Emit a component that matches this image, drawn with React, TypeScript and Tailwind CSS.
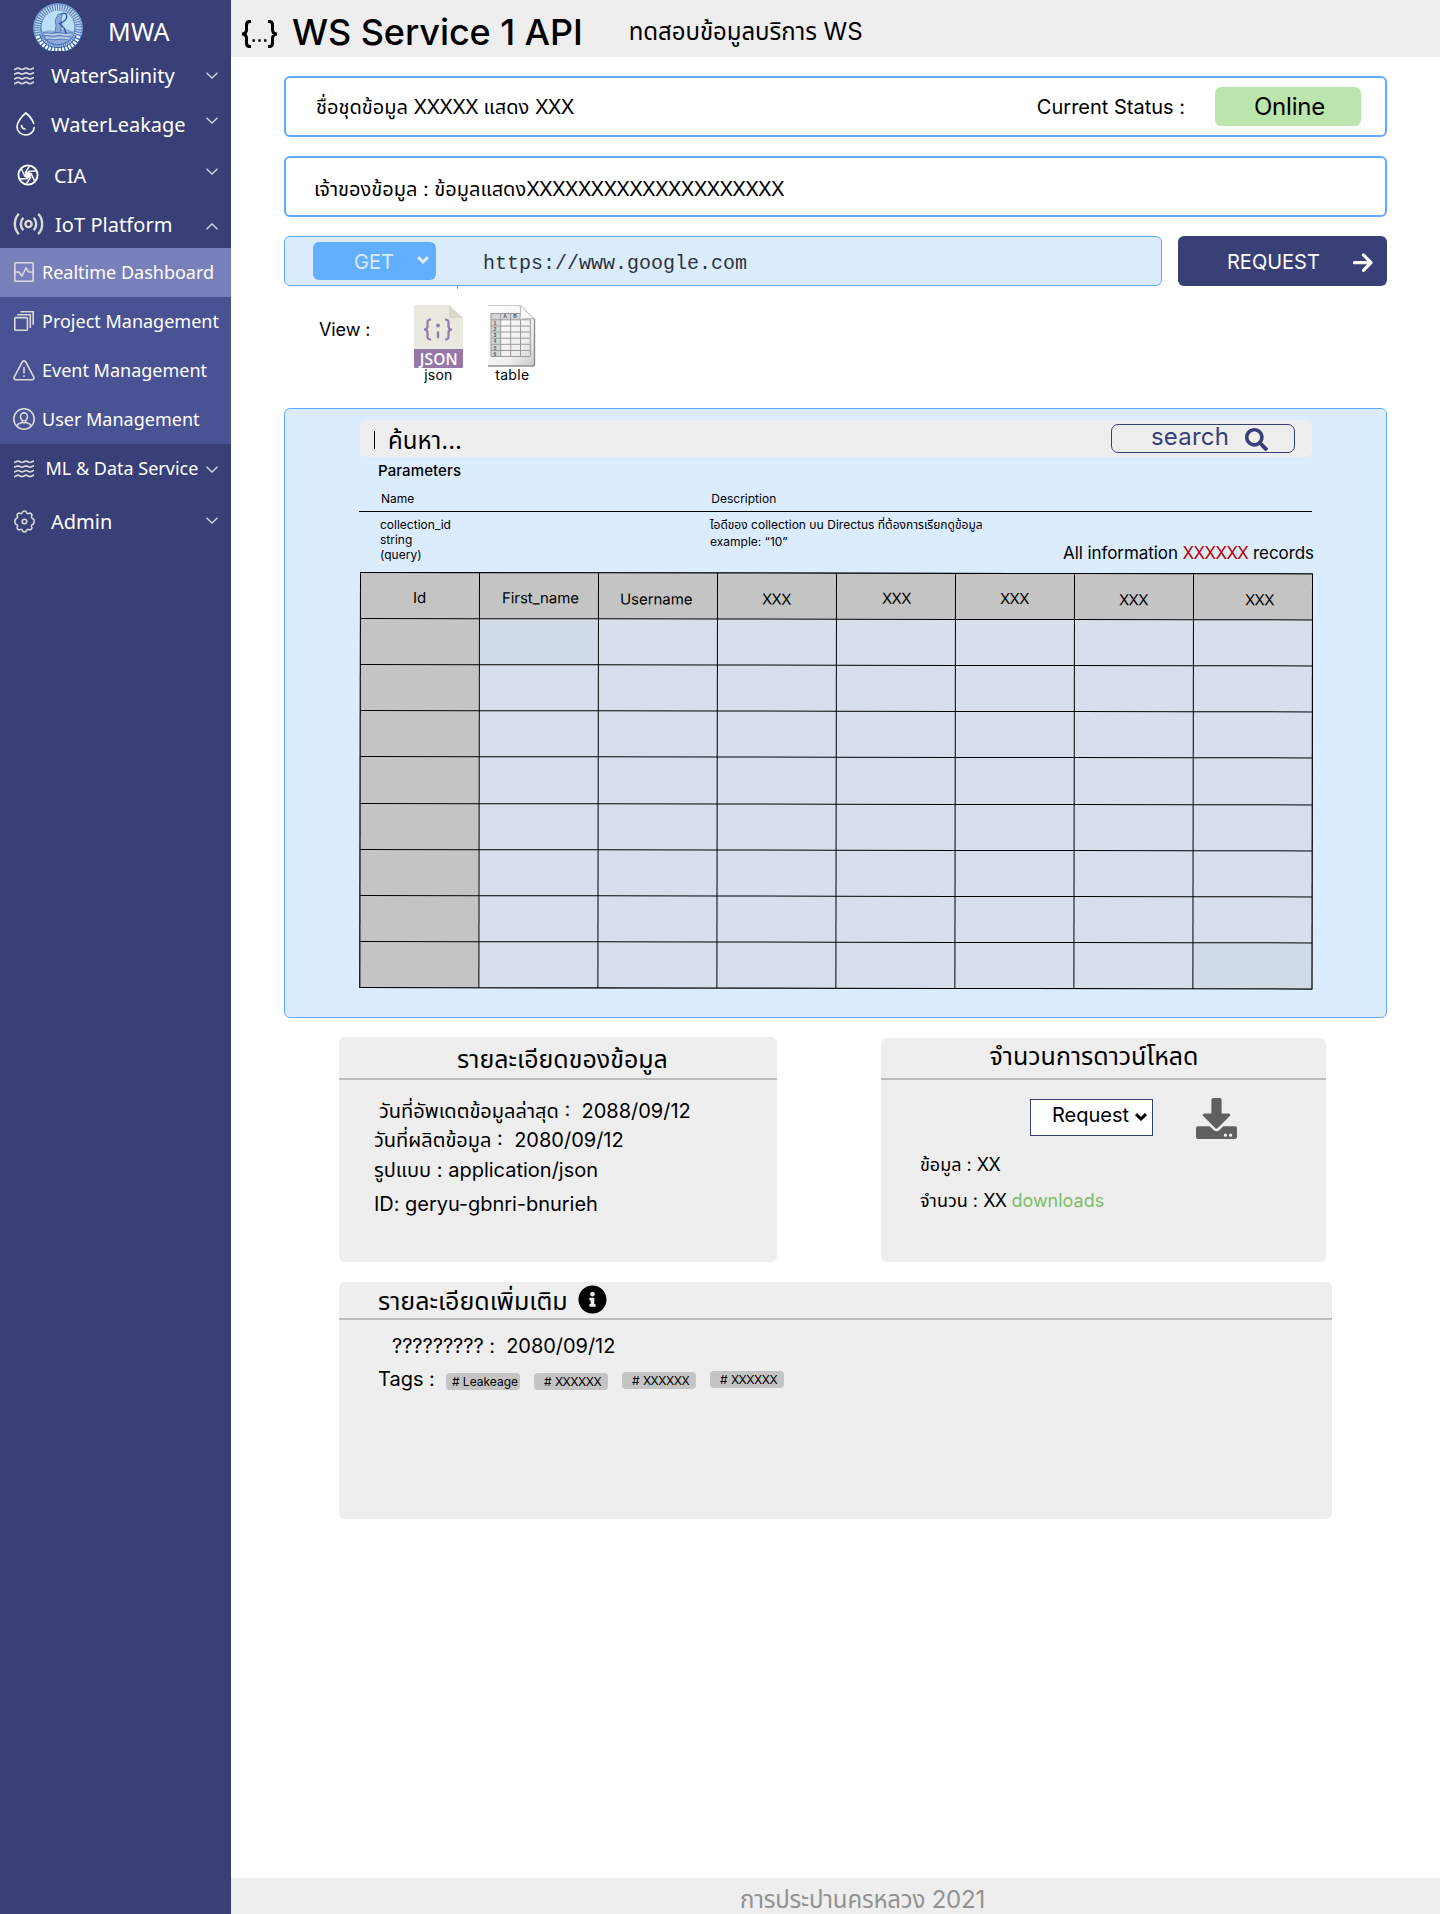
import type { ReactNode } from "react";
import { FaDownload, FaInfoCircle, FaSearch } from "react-icons/fa";

function T({ className = "", children }: { className?: string; children: ReactNode }) {
  return <span className={"inline-block shrink-0 whitespace-pre " + className}>{children}</span>;
}

function X({ n, className = "" }: { n: number; className?: string }) {
  return <span className={"tracking-[-0.038em] " + className}>{"X".repeat(n)}</span>;
}

const grey = "#d9d9d9";

function Logo() {
  return (
    <svg width="50" height="48" viewBox="0 0 50 48" className="ml-[33px] mt-[3px]">
      <circle cx="25" cy="25" r="24.6" fill="#4f7dc0" />
      <circle cx="25" cy="25" r="20.500" fill="none" stroke="#c9daf0" strokeWidth="6" strokeDasharray="1.300 1.100" />
      <circle cx="25" cy="25" r="24.300" fill="none" stroke="#8fb2e2" strokeWidth="0.800" />
      <circle cx="25" cy="24" r="16.500" fill="#b8e0f8" />
      <path d="M9.500 29c4-2 7-2 11-1l9-2c4 0 9 1 12 3-2 7-9 12-16.500 12S11.500 36 9.500 29z" fill="#8eacd9" />
      <path d="M10 30c4-1.500 6 1.500 10 0s8 1.500 20-.5M11 33c4-1.500 8 1.500 12 0s8 1.500 15 0M14 36.500c4-1.500 6 1.500 11 0s7 1 10 0" fill="none" stroke="#4c75b8" strokeWidth="0.800" />
      <path d="M12 31.500c4-1.500 7 1.500 11 0s8 1.500 15 0M13 35c4-1.500 6 1.500 11 0s7 1 12 0" fill="none" stroke="#e4eef9" strokeWidth="0.800" />
      <path d="M25 11.500c2-1.500 4-1 4 1l-1 4 1 5-2 8h-5l1-7-1-5z" fill="#8ba9d8" stroke="#4267ac" strokeWidth="0.700" />
      <path d="M28 11.500c2-1.500 5-1.500 5.500.5s-.5 5-3 6.500l-4 2 5 5 1.500 5" fill="none" stroke="#2d4f9e" strokeWidth="1.300" />
      <path d="M4.500 33c3 9 11 14 20.500 14s17.500-5 20.500-14" fill="none" stroke="#2f5fae" strokeWidth="6" />
      <path d="M4.500 33c3 9 11 14 20.500 14s17.500-5 20.500-14" fill="none" stroke="#fff" strokeWidth="4" strokeDasharray="2.200 1.200" />
    </svg>
  );
}

function Waves() {
  const d = "c1.700 0 2.300-1.400 4-1.400s2.300 1.400 4 1.400 2.300-1.400 4-1.400 2.300 1.400 4 1.400 2.300-1.400 4-1.400";
  return (
    <svg width="20" height="18" viewBox="0 0 20 18" fill="none" stroke={grey} strokeWidth="1.700">
      <path d={"M0 2.500" + d} />
      <path d={"M0 7.200" + d} />
      <path d={"M0 11.900" + d} />
      <path d={"M0 16.600" + d} />
    </svg>
  );
}
function Drop() {
  return (
    <svg width="20" height="24" viewBox="0 0 20 24" fill="none" stroke="#fff" strokeWidth="1.600" strokeLinecap="round">
      <path d="M18.200 15.500c-.4 4.500-4 7.500-8.400 7.500C5 23 1 19.800 1 14.800 1 10 6 4 9.800 1c3 2.300 6.600 6.600 7.900 10.500" />
      <path d="M5.500 13.500c.2 2 1.600 3.300 3.600 3.500" />
    </svg>
  );
}
function Aperture() {
  return (
    <svg width="22" height="22" viewBox="0 0 22 22" fill="none" stroke="#fff">
      <circle cx="11" cy="11" r="9.600" strokeWidth="1.900" />
      <circle cx="11" cy="11" r="3" fill="#fff" strokeWidth="0.500" />
      <path d="M11 7.500l8-.5M14 9.200l3.500 7.500M14 12.800L9.500 19.500M11 14.500L3 15M8 12.800L4.500 5.300M8 9.200l4.500-7" strokeWidth="1.500" />
    </svg>
  );
}
function Signal() {
  return (
    <svg width="31" height="22" viewBox="0 0 31 22" fill="none" stroke={grey} strokeWidth="2.400">
      <circle cx="15.500" cy="11" r="3.100" />
      <path d="M10.300 4.800c-3.300 3.500-3.300 8.900 0 12.400M20.700 4.800c3.300 3.500 3.300 8.900 0 12.400M5.800.8c-5.300 6-5.300 14.400 0 20.400M25.200.8c5.300 6 5.300 14.400 0 20.400" />
    </svg>
  );
}
function Pulse() {
  return (
    <svg width="20" height="20" viewBox="0 0 20 20" fill="none" stroke={grey} strokeWidth="1.600">
      <rect x="0.800" y="0.800" width="18.400" height="18.400" rx="0.800" />
      <path d="M1 10h4l2.800 4 4.200-8 2.500 4H19" />
    </svg>
  );
}
function Stack() {
  return (
    <svg width="20" height="20" viewBox="0 0 20 20" fill="none" stroke={grey} strokeWidth="1.600">
      <rect x="0.800" y="6.600" width="12.600" height="12.600" rx="0.800" />
      <path d="M3.200 3.700h13.100v13.200M6.300.8h12.900v13" />
    </svg>
  );
}
function Warning() {
  return (
    <svg width="22" height="21" viewBox="0 0 22 21" fill="none" stroke={grey} strokeWidth="1.600">
      <path d="M9.200 2c.8-1.500 2.800-1.500 3.600 0l8 15c.7 1.400-.2 2.700-1.700 2.700H2.900c-1.500 0-2.400-1.300-1.700-2.700z" />
      <path d="M11 7v6.500M11 15.300v1.700" />
    </svg>
  );
}
function UserRing() {
  return (
    <svg width="22" height="22" viewBox="0 0 22 22" fill="none" stroke={grey} strokeWidth="1.600">
      <circle cx="11" cy="11" r="10.200" />
      <ellipse cx="11" cy="8.800" rx="3.500" ry="3.900" />
      <path d="M4 18.300c.5-2.300 2.600-3.300 5.200-3.800v-2.200M18 18.300c-.5-2.300-2.600-3.300-5.200-3.800v-2.200M9.200 14.700h3.600" />
    </svg>
  );
}
function Gear() {
  return (
    <svg width="23" height="23" viewBox="0 0 24 24" fill="none" stroke={grey} strokeWidth="1.600" strokeLinejoin="round">
      <path d="M9.800 2.600c.4-2 4-2 4.400 0 .2 1.200 1.300 1.700 2.300 1 1.800-1.100 4.200 1.300 3 3-.6 1-.1 2.100 1 2.400 2 .4 2 5.600 0 6-1.100.3-1.600 1.400-1 2.400 1.200 1.700-1.200 4.100-3 3-1-.7-2.100-.2-2.300 1-.4 2-4 2-4.400 0-.2-1.200-1.300-1.700-2.300-1-1.800 1.100-4.200-1.300-3-3 .6-1 .1-2.100-1-2.400-2-.4-2-5.600 0-6 1.100-.3 1.600-1.400 1-2.400-1.200-1.700 1.200-4.100 3-3 1 .7 2.100.2 2.300-1z" />
      <circle cx="12" cy="12" r="2.400" />
    </svg>
  );
}
function Chevron({ up = false, className = "" }: { up?: boolean; className?: string }) {
  return (
    <svg width="12" height="7" viewBox="0 0 12 7" fill="none" stroke={grey} strokeWidth="1.300" className={"ml-auto mr-[13px] shrink-0 " + className}>
      <path d={up ? "M.5 6.200L6 1l5.500 5.200" : "M.5.800L6 6l5.500-5.200"} />
    </svg>
  );
}
function BoldChevron({ className = "" }: { className?: string }) {
  return (
    <svg width="12" height="8" viewBox="0 0 12 8" fill="none" stroke="currentColor" strokeWidth="3" className={"shrink-0 " + className}>
      <path d="M1 1.200l5 4.800 5-4.800" />
    </svg>
  );
}

function JsonFile() {
  return (
    <svg width="49" height="63" viewBox="0 0 49 63">
      <path d="M1.500 0H35l14 13v31H0V1.500z" fill="#e9e9e0" />
      <path d="M35 0v13h14z" fill="#d9d7ca" />
      <path d="M0 44h49v17.500q0 1.500-1.500 1.500h-46Q0 63 0 61.500z" fill="#9777a8" />
      <g fill="none" stroke="#9777a8" strokeWidth="2.200">
        <path d="M17 14.500c-3 0-3.500 1-3.500 3v4c0 2-1 3-3.500 3 2.500 0 3.500 1 3.500 3v4c0 2 .5 3 3.500 3" />
        <path d="M31 14.500c3 0 3.500 1 3.500 3v4c0 2 1 3 3.500 3-2.500 0-3.500 1-3.500 3v4c0 2-.5 3-3.500 3" />
      </g>
      <circle cx="24" cy="20.500" r="1.900" fill="#9777a8" />
      <path d="M24 27.500v4.500" stroke="#9777a8" strokeWidth="2.400" strokeLinecap="round" />
      <text x="24.700" y="59.500" textAnchor="middle" textLength="38" fontSize="15.500" fontWeight="600" fill="#fff" fontFamily="'Open Sans'">
        JSON
      </text>
    </svg>
  );
}
function TableFile() {
  const rows = [0, 1, 2, 3, 4, 5];
  return (
    <svg width="48" height="62" viewBox="0 0 48 62">
      <defs>
        <linearGradient id="sheet" x1="0" y1="0" x2="1" y2="1">
          <stop offset="0" stopColor="#ffffff" />
          <stop offset="0.700" stopColor="#eeeeee" />
          <stop offset="1" stopColor="#c8c8c8" />
        </linearGradient>
      </defs>
      <path d="M0 .5h32L46.500 14v46q0 1-1 1H0z" fill="url(#sheet)" />
      <path d="M0 .5h32" stroke="#ccc" />
      <path d="M46.500 14v46q0 1-1 1H0" fill="none" stroke="#8e8e8e" strokeWidth="1.400" />
      <rect x="3" y="8" width="29" height="6.500" fill="#d5d5d5" />
      <rect x="3" y="8" width="9.500" height="43.500" fill="#d5d5d5" />
      <path
        d="M3 8.500h29M3 14.800h39M3 21h39M3 27h39M3 33.200h39M3 39.300h39M3 45.500h39M3 51.500h39M3 8v43.500M12.700 8v43.500M22.700 8v43.500M32.500 14v37.500M42.300 14.500v37"
        stroke="#9a9a9a"
        strokeWidth="1"
      />
      <path d="M32 .5c1 4 1 9-.5 14 5-1 10-1 15-.5z" fill="#fafafa" stroke="#a8a8a8" strokeWidth="0.900" />
      <g fontSize="5" fontWeight="700" fill="#555" fontFamily="'Liberation Sans'" textAnchor="middle">
        <text x="17" y="13.300">A</text>
        <text x="27" y="13.300">B</text>
        {rows.map((r) => (
          <text key={r} x="7" y={19.700 + r * 6.200}>{r + 1}</text>
        ))}
      </g>
    </svg>
  );
}

const headers = [
  { t: "Id", c: "pl-[52px]" },
  { t: "First_name", c: "pl-[22px]" },
  { t: "Username", c: "pl-[21px] pt-px" },
  { t: <X n={3} />, c: "pl-[44px] pt-px" },
  { t: <X n={3} />, c: "pl-[45px]" },
  { t: <X n={3} />, c: "pl-[44px]" },
  { t: <X n={3} />, c: "pl-[44px] pt-px" },
  { t: <X n={3} />, c: "pl-[51px] pt-px" },
];

export default function App() {
  return (
    <div className="flex h-[1914px] w-[1440px] bg-white text-black [font-family:Inter,'Noto_Sans_Thai',sans-serif]">
      <aside className="h-full w-[231px] shrink-0 bg-[#384077] text-[20px] text-white [font-family:'Noto_Sans',sans-serif]">
        <div className="flex h-[51px] items-start">
          <Logo />
          <T className="ml-[25px] mt-[15px] text-[25px] leading-[32px] tracking-[0.3px]">MWA</T>
        </div>
        <div className="flex h-[48.400px] items-center pl-[14px] pt-[2px]">
          <Waves />
          <T className="ml-[17px]">WaterSalinity</T>
          <Chevron className="mb-px" />
        </div>
        <div className="flex h-[49.600px] items-center pl-[16px]">
          <Drop />
          <T className="ml-[15px] mt-[2px]">WaterLeakage</T>
          <Chevron className="mb-[7px]" />
        </div>
        <div className="flex h-[52px] items-center pl-[17px]">
          <Aperture />
          <T className="ml-[15px] mt-[2px]">CIA</T>
          <Chevron className="mb-[6px]" />
        </div>
        <div className="flex h-[47px] items-center pl-[13px]">
          <Signal />
          <T className="ml-[11px] mt-[2px] tracking-[0.05px]">IoT Platform</T>
          <Chevron up className="mt-[4px]" />
        </div>
        <div className="bg-[#495394] text-[18px]">
          <div className="flex h-[49px] items-center bg-[#7780bb] pl-[14px]">
            <Pulse />
            <T className="ml-[8px]">Realtime Dashboard</T>
          </div>
          <div className="flex h-[49px] items-center pl-[14px]">
            <Stack />
            <T className="ml-[8px]">Project Management</T>
          </div>
          <div className="flex h-[49px] items-center pl-[13px]">
            <Warning />
            <T className="ml-[7px]">Event Management</T>
          </div>
          <div className="flex h-[49px] items-center pl-[13px]">
            <UserRing />
            <T className="ml-[7px]">User Management</T>
          </div>
        </div>
        <div className="flex h-[48px] items-center pl-[14px] pt-[2px]">
          <Waves />
          <T className="ml-[11.500px] text-[18px]">ML &amp; Data Service</T>
          <Chevron className="mt-px" />
        </div>
        <div className="flex h-[58px] items-center pl-[13px] pt-[2px]">
          <Gear />
          <T className="ml-[15px]">Admin</T>
          <Chevron className="mb-[2px]" />
        </div>
      </aside>

      <div className="flex h-full flex-1 flex-col">
        <header className="flex h-[57px] items-start bg-[#eeeeee]">
          <svg width="37" height="28" viewBox="0 0 37 28" fill="none" stroke="#000" strokeWidth="3" className="ml-[10px] mt-[20px] shrink-0">
            <path d="M10 1.400H9C6.500 1.400 5.500 2.500 5.500 5v4.500C5.500 12 4 14 1 14c3 0 4.500 2 4.500 4.500V23c0 2.500 1 3.600 3.500 3.600h1M27 1.400h1c2.500 0 3.500 1.100 3.500 3.600v4.500C31.500 12 33 14 36 14c-3 0-4.500 2-4.500 4.500V23c0 2.500-1 3.600-3.500 3.600h-1" />
            <path d="M11.500 20.500h2.400M17.300 20.500h2.400M23.100 20.500h2.400" strokeWidth="2.400" />
          </svg>
          <T className="ml-[14px] mt-[8px] text-[36px] leading-[48px] font-medium tracking-[-0.08px]">WS Service 1 API</T>
          <T className="ml-[46px] mt-[20px] text-[24px] leading-[24px] tracking-[-0.05px]">ทดสอบข้อมูลบริการ WS</T>
        </header>

        <main className="flex flex-1 flex-col pl-[53px]">
          <section className="mt-[19px] flex h-[61px] w-[1103px] items-start rounded-[6px] border-2 border-[#60abff]">
            <T className="ml-[30px] mt-[17px] text-[20px] leading-[24px]">
              ชื่อชุดข้อมูล <X n={5} /> แสดง <X n={3} />
            </T>
            <div className="ml-auto flex items-start">
              <T className="mt-[17px] text-[20px] leading-[24px]">Current Status :</T>
              <div className="ml-[30px] mr-[24px] mt-[9px] flex h-[39px] w-[146px] justify-center rounded-[6px] bg-[#bbe5ac]">
                <T className="ml-[3px] mt-[8px] text-[24px] leading-[24px] tracking-[-0.2px]">Online</T>
              </div>
            </div>
          </section>

          <section className="mt-[19px] flex h-[61px] w-[1103px] items-start rounded-[6px] border-2 border-[#60abff]">
            <T className="ml-[28px] mt-[19px] text-[20px] leading-[24px]">
              เจ้าของข้อมูล : ข้อมูลแสดง<X n={20} />
            </T>
          </section>

          <section className="mt-[19px] flex h-[50px] w-[1103px] justify-between">
            <div className="flex w-[878px] items-start rounded-[6px] border border-[#60abff] bg-[#dbecff]">
              <div className="ml-[28px] mt-[5px] flex h-[38px] w-[123px] items-start rounded-[6px] bg-[#62aeff] text-[#dbecff]">
                <T className="ml-[41px] mt-[8px] text-[20px] leading-[24px]">GET</T>
                <BoldChevron className="ml-auto mr-[7px] mt-[14px]" />
              </div>
              <T className="ml-[47px] mt-[15px] text-[20px] leading-[24px] text-[#2f353c] [font-family:'Liberation_Mono',monospace]">https://www.google.com</T>
            </div>
            <div className="flex w-[209px] items-start rounded-[6px] bg-[#384077] text-white">
              <T className="ml-[49px] mt-[14px] text-[20px] leading-[24px]">REQUEST</T>
              <svg width="20" height="20" viewBox="0 0 20 20" fill="none" stroke="#fff" strokeWidth="3.200" className="ml-auto mr-[14px] mt-[17px]" strokeLinecap="round">
                <path d="M1.500 9.700H17" />
                <path d="M10.500 2l7.500 7.700-7.500 7.700" strokeLinejoin="round" />
              </svg>
            </div>
          </section>
          <div className="ml-[173px] h-[3px] w-px bg-[#60abff]" />

          <section className="mt-[16px] flex h-[103px] items-start">
            <T className="ml-[35px] mt-[13px] text-[18px] leading-[24px] tracking-[-0.1px]">View :</T>
            <div className="ml-[43px] flex w-[50px] flex-col items-center">
              <JsonFile />
              <T className="-mt-px text-[14px] leading-[16px] tracking-[0.2px]">json</T>
            </div>
            <div className="ml-[25px] flex w-[48px] flex-col items-center">
              <TableFile />
              <T className="text-[14px] leading-[16px] tracking-[0.3px]">table</T>
            </div>
          </section>

          <section className="h-[610px] w-[1103px] rounded-[6px] border border-[#60abff] bg-[#dbecff] pl-[75px] pt-[11px]">
            <div className="flex h-[37px] w-[952px] items-start rounded-[6px] bg-[#eeeeee]">
              <div className="ml-[14px] mt-[11px] h-[18px] w-px bg-black" />
              <T className="ml-[13px] mt-[9px] text-[24px] leading-[24px]">ค้นหา...</T>
              <div className="ml-auto mr-[17px] mt-[4px] flex h-[29px] w-[184px] items-start rounded-[7px] border border-[#384077] text-[#384077]">
                <T className="ml-[39px] text-[24px] leading-[24px] tracking-[0.2px]">search</T>
                <FaSearch size={23} className="ml-auto mr-[26px] mt-[3px]" />
              </div>
            </div>
            <T className="ml-[18px] mt-[2px] text-[15px] leading-[24px] font-medium tracking-[0.1px]">Parameters</T>
            <div className="-mx-[1px] flex h-[29px] w-[953px] items-start border-b border-black text-[12px] leading-[24px]">
              <T className="ml-[22px] mt-[4px]">Name</T>
              <T className="ml-[297px] mt-[4px]">Description</T>
            </div>
            <div className="flex h-[60px] items-start text-[12px]">
              <div className="ml-[20px] mt-[5px] flex w-[330px] flex-col items-start leading-[15px]">
                <T>collection_id</T>
                <T>string</T>
                <T>(query)</T>
              </div>
              <div className="mt-[4px] flex w-[320px] flex-col items-start leading-[17px]">
                <T>ไอดีของ collection บน Directus ที่ต้องการเรียกดูข้อมูล</T>
                <T>example: “10”</T>
              </div>
              <p className="ml-[33px] mt-[29px] text-[17px] leading-[24px] tracking-[-0.07px] whitespace-pre">
                All information <X n={6} className="text-[#b90000]" /> records
              </p>
            </div>
            <div className="-ml-[0.500px] grid h-[416px] w-[953px] origin-top-left rotate-[0.085deg] grid-cols-8 grid-rows-9 gap-px border border-black bg-black">
              {headers.map((h, i) => (
                <div key={i} className={"bg-[#c4c4c4] " + h.c}>
                  <T className="mt-[13px] text-[15px] leading-[24px] tracking-[-0.05px]">{h.t}</T>
                </div>
              ))}
              {Array.from({ length: 64 }, (_, i) => (
                <div key={i} className={i % 8 === 0 ? "bg-[#c4c4c4]" : i === 1 || i === 63 ? "bg-[#d1dbe7]" : "bg-[#d6dfeb]"} />
              ))}
            </div>
          </section>

          <div className="mt-[19px] flex items-start">
            <section className="ml-[55px] h-[224.500px] w-[438px] rounded-[6px] bg-[#eeeeee]">
              <div className="flex h-[43px] justify-center border-b-2 border-[#bbbbbb]">
                <T className="ml-[9px] mt-[10px] text-[25px] leading-[24px]">รายละเอียดของข้อมูล</T>
              </div>
              <div className="ml-[35px] mt-[19px] flex flex-col items-start text-[20px] leading-[24px]">
                <T className="ml-[5px]">วันที่อัพเดตข้อมูลล่าสุด :  2088/09/12</T>
                <T className="mt-[5px]">วันที่ผลิตข้อมูล :  2080/09/12</T>
                <T className="mt-[6px]">รูปแบบ : application/json</T>
                <T className="mt-[10px] tracking-[-0.04px]">ID: geryu-gbnri-bnurieh</T>
              </div>
            </section>
            <section className="ml-[104px] mt-px h-[223.500px] w-[445px] rounded-[6px] bg-[#eeeeee]">
              <div className="flex h-[42px] justify-center border-b-2 border-[#bbbbbb]">
                <T className="mr-[19px] mt-[6px] text-[25px] leading-[24px]">จำนวนการดาวน์โหลด</T>
              </div>
              <div className="ml-[149px] mt-[18px] flex items-start">
                <div className="mt-px flex h-[37px] w-[123px] items-start border border-[#384077] bg-white">
                  <T className="ml-[21px] mt-[3px] text-[20px] leading-[24px]">Request</T>
                  <BoldChevron className="ml-[6px] mt-[13px]" />
                </div>
                <FaDownload size={41} color="#606060" className="ml-[43px]" />
              </div>
              <div className="ml-[39px] mt-[14px] flex flex-col items-start text-[18px] leading-[24px]">
                <T>ข้อมูล : <X n={2} /></T>
                <T className="mt-[12px]">จำนวน : <X n={2} /> <span className="text-[#7abf65]">downloads</span></T>
              </div>
            </section>
          </div>

          <section className="ml-[55px] mt-[20px] h-[237px] w-[993px] rounded-[6px] bg-[#eeeeee]">
            <div className="flex h-[38px] items-start border-b-2 border-[#bbbbbb]">
              <T className="ml-[39px] mt-[7px] text-[25px] leading-[24px]">รายละเอียดเพิ่มเติม</T>
              <FaInfoCircle size={29} className="ml-[10px] mt-[3px]" />
            </div>
            <T className="ml-[53px] mt-[14px] block text-[20px] leading-[24px] tracking-[-0.04px]">?????????{" :  2080/09/12"}</T>
            <div className="ml-[39px] mt-[8px] flex items-start">
              <T className="text-[20px] leading-[24px]">Tags :</T>
              <div className="ml-[11px] mt-[6px] flex h-[17px] w-[74px] rounded-[4px] bg-[#c4c4c4] pl-[6px]">
                <T className="text-[12px] leading-[17px]"># Leakeage</T>
              </div>
              {["mt-[6px]", "mt-[5px]", "mt-[4px]"].map((m) => (
                <div key={m} className={"ml-[14px] flex h-[17px] w-[74px] rounded-[4px] bg-[#c4c4c4] pl-[10px] " + m}>
                  <T className="text-[12px] leading-[17px]"># <X n={6} /></T>
                </div>
              ))}
            </div>
          </section>
        </main>

        <footer className="flex h-[36px] items-start overflow-hidden bg-[#eeeeee] text-[#929292]">
          <T className="ml-[509px] mt-[10px] text-[24px] leading-[24px] tracking-[-0.2px]">การประปานครหลวง 2021</T>
        </footer>
      </div>
    </div>
  );
}
